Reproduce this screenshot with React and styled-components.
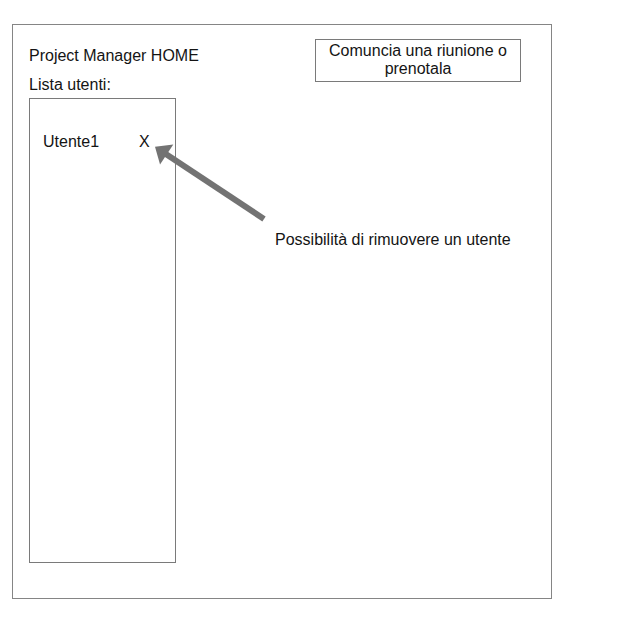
import React from "react";
import styled, { createGlobalStyle } from "styled-components";

const GlobalStyle = createGlobalStyle`
  html, body { margin: 0; padding: 0; background: #ffffff; }
  body {
    font-family: "Liberation Sans", Arial, sans-serif;
    font-size: 16px;
    line-height: 18px;
    color: #141414;
  }
`;

const Page = styled.div`
  padding: 24px 0 0 12px;
`;

const Frame = styled.div`
  position: relative;
  box-sizing: border-box;
  width: 540px;
  height: 575px;
  border: 1px solid #858585;
  display: flex;
  justify-content: space-between;
  align-items: flex-start;
`;

const LeftColumn = styled.div`
  display: flex;
  flex-direction: column;
  padding: 22px 0 0 16px;
`;

const Title = styled.div`
  white-space: nowrap;
`;

const Label = styled.div`
  margin-top: 11px;
  white-space: nowrap;
`;

const UserList = styled.div`
  box-sizing: border-box;
  margin-top: 4px;
  width: 147px;
  height: 465px;
  border: 1px solid #7a7a7a;
  padding: 34px 0 0 13px;
  display: flex;
  flex-direction: column;
`;

const UserRow = styled.div`
  display: grid;
  grid-template-columns: 96px auto;
`;

const RemoveMark = styled.span``;

const ActionButton = styled.div`
  box-sizing: border-box;
  margin: 14px 30px 0 0;
  width: 206px;
  height: 43px;
  border: 1px solid #7a7a7a;
  display: flex;
  align-items: center;
  justify-content: center;
  text-align: center;
  padding: 0 8px 2px;
`;

const Note = styled.div`
  position: absolute;
  left: 262px;
  top: 206px;
  white-space: nowrap;
`;

const ArrowLayer = styled.svg`
  position: absolute;
  left: 0;
  top: 0;
  pointer-events: none;
  overflow: visible;
`;

function Arrow() {
  const tip = [142, 121.7];
  const tail = [251, 194];
  const dx = tail[0] - tip[0];
  const dy = tail[1] - tip[1];
  const len = Math.hypot(dx, dy);
  const ux = dx / len;
  const uy = dy / len;
  const headLen = 14;
  const headHalf = 12;
  const base = [tip[0] + ux * headLen, tip[1] + uy * headLen];
  const px = uy;
  const py = -ux;
  const w1 = [base[0] + px * headHalf, base[1] + py * headHalf];
  const w2 = [base[0] - px * headHalf, base[1] - py * headHalf];
  const lineStart = [base[0] - ux * 1, base[1] - uy * 1];
  return (
    <ArrowLayer width="540" height="575" viewBox="0 0 540 575">
      <line
        x1={lineStart[0]}
        y1={lineStart[1]}
        x2={tail[0]}
        y2={tail[1]}
        stroke="#737373"
        strokeWidth="6"
      />
      <polygon
        points={`${tip[0]},${tip[1]} ${w1[0]},${w1[1]} ${w2[0]},${w2[1]}`}
        fill="#737373"
      />
    </ArrowLayer>
  );
}

export default function App() {
  return (
    <>
      <GlobalStyle />
      <Page>
        <Frame>
          <LeftColumn>
            <Title>Project Manager HOME</Title>
            <Label>Lista utenti:</Label>
            <UserList>
              <UserRow>
                <span>Utente1</span>
                <RemoveMark>X</RemoveMark>
              </UserRow>
            </UserList>
          </LeftColumn>
          <ActionButton>Comuncia una riunione o prenotala</ActionButton>
          <Arrow />
          <Note>Possibilità di rimuovere un utente</Note>
        </Frame>
      </Page>
    </>
  );
}
